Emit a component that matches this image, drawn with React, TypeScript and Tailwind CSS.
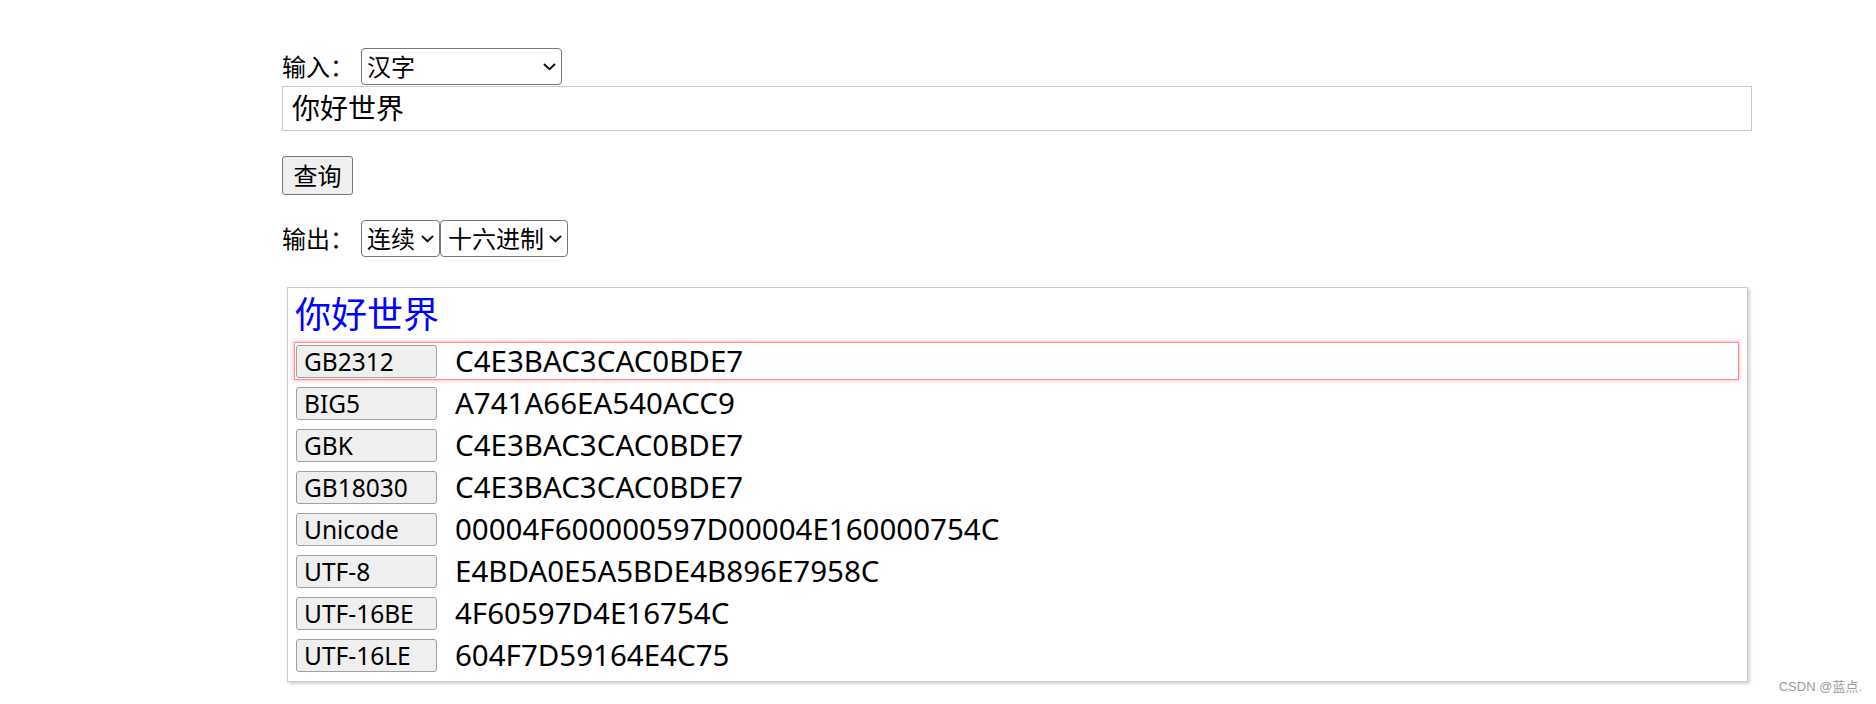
import React from "react";

const Chevron = () => (
  <svg width="13" height="8" viewBox="0 0 13 8" className="pointer-events-none absolute right-[6px] top-1/2 -translate-y-1/2">
    <path d="M1.5 1.5 L6.5 6.2 L11.5 1.5" fill="none" stroke="#111" strokeWidth="2" strokeLinecap="round" strokeLinejoin="round" />
  </svg>
);

function Select({ value, options, widthClass, padClass }: { value: string; options: string[]; widthClass: string; padClass: string }) {
  return (
    <div className={`relative h-[37px] ${widthClass}`}>
      <select
        defaultValue={value}
        className={`h-full w-full appearance-none rounded-[4px] border border-[#767676] bg-white ${padClass} text-[24px] leading-[35px] text-black outline-none`}
      >
        {options.map((o) => (
          <option key={o}>{o}</option>
        ))}
      </select>
      <Chevron />
    </div>
  );
}

const rows: [string, string][] = [
  ["GB2312", "C4E3BAC3CAC0BDE7"],
  ["BIG5", "A741A66EA540ACC9"],
  ["GBK", "C4E3BAC3CAC0BDE7"],
  ["GB18030", "C4E3BAC3CAC0BDE7"],
  ["Unicode", "00004F600000597D00004E160000754C"],
  ["UTF-8", "E4BDA0E5A5BDE4B896E7958C"],
  ["UTF-16BE", "4F60597D4E16754C"],
  ["UTF-16LE", "604F7D59164E4C75"],
];

export default function App() {
  return (
    <div className="relative h-[704px] w-full bg-white font-['Noto_Sans','Noto_Sans_CJK_SC',sans-serif] text-black">
      <div className="pl-[282px] pt-[48px]">
        <div className="flex h-[38px] items-start">
          <span className="w-[79px] pt-[1px] text-[24px] leading-[35px]">输入：</span>
          <Select value="汉字" options={["汉字"]} widthClass="w-[201px]" padClass="pl-[5px]" />
        </div>
        <div className="flex h-[45px] w-[1470px] items-center border border-[#c8c8c8] pl-[9px]">
          <span className="text-[28px] leading-[43px]">你好世界</span>
        </div>
        <button className="mt-[25px] flex h-[39px] w-[71px] items-center justify-center rounded-[3px] border border-[#767676] bg-[#efefef] text-[24px] leading-[37px]">
          查询
        </button>
        <div className="mt-[25px] flex h-[37px] items-start">
          <span className="w-[79px] pt-[1px] text-[24px] leading-[35px]">输出：</span>
          <Select value="连续" options={["连续"]} widthClass="w-[79px]" padClass="pl-[5px]" />
          <Select value="十六进制" options={["十六进制"]} widthClass="w-[128px]" padClass="pl-[7px]" />
        </div>
        <div className="mt-[30px] ml-[5px] w-[1461px] border border-[#cccccc] pb-[7px] pl-[6px] pr-[8px] pt-[4px] shadow-[2px_2px_3px_rgba(0,0,0,0.18)]">
          <div className="h-[46px] pl-[1px] text-[36px] leading-[46px] text-[#0000ff]">你好世界</div>
          <div className="flex flex-col gap-[4px] pt-[4px]">
            {rows.map(([name, hex], i) => (
              <div
                key={name}
                className={`flex h-[38px] items-center border p-[1px] ${
                  i === 0 ? "border-[#ff8f8f] shadow-[0_0_4px_rgba(255,60,60,0.55)]" : "border-transparent"
                }`}
              >
                <button className="h-[33px] w-[141px] shrink-0 rounded-[3px] border border-[#a0a0a0] bg-[#efefef] pl-[7px] text-left text-[24.5px] leading-[31px]">
                  {name}
                </button>
                <span className="ml-[18px] text-[29.5px] leading-[36px]">{hex}</span>
              </div>
            ))}
          </div>
        </div>
      </div>
      <div className="absolute right-[14px] top-[678px] font-['Liberation_Sans','Noto_Sans_CJK_SC',sans-serif] text-[13px] leading-[18px] text-[#9a9a9a]">
        CSDN @蓝点.
      </div>
    </div>
  );
}
